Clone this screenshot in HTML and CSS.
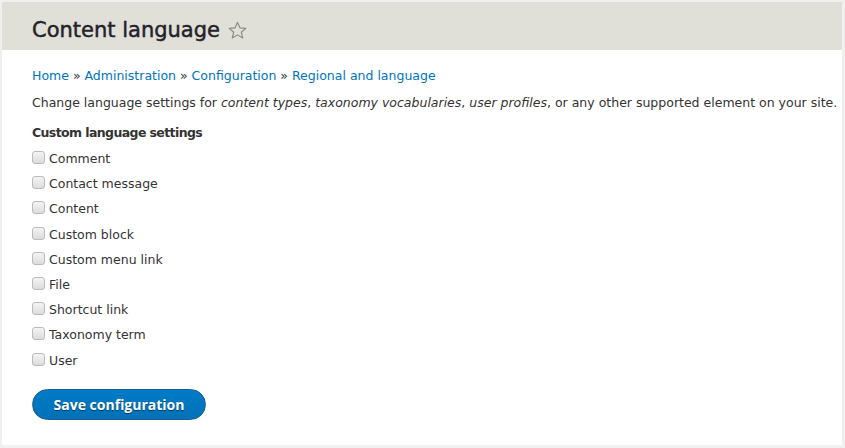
FILE: index.html
```html
<!DOCTYPE html>
<html>
<head>
<meta charset="utf-8">
<link rel="stylesheet" href="styles.css">
</head>
<body>
<div class="frame">
  <header class="page-header">
    <h1 class="title">Content language</h1>
    <svg class="star" width="19" height="19" viewBox="0 0 20 20"><polygon points="10,1.5 12.6,7.2 18.7,7.7 14,11.8 15.5,17.9 10,14.6 4.5,17.9 6,11.8 1.3,7.7 7.4,7.2" fill="none" stroke="#8a8a82" stroke-width="1.2" stroke-linejoin="round"/></svg>
  </header>
  <main class="content">
    <nav class="breadcrumb"><a href="#">Home</a> » <a href="#">Administration</a> » <a href="#">Configuration</a> » <a href="#">Regional and language</a></nav>
    <p class="desc">Change language settings for <em>content types</em>, <em>taxonomy vocabularies</em>, <em>user profiles</em>, or any other supported element on your site.</p>
    <div class="group-title">Custom language settings</div>
    <ul class="checks">
      <li><span class="box"></span>Comment</li>
      <li><span class="box"></span>Contact message</li>
      <li><span class="box"></span>Content</li>
      <li><span class="box"></span>Custom block</li>
      <li><span class="box"></span>Custom menu link</li>
      <li><span class="box"></span>File</li>
      <li><span class="box"></span>Shortcut link</li>
      <li><span class="box"></span>Taxonomy term</li>
      <li><span class="box"></span>User</li>
    </ul>
    <button class="btn">Save configuration</button>
  </main>
</div>
</body>
</html>
```
FILE: styles.css
```css
html, body { margin: 0; padding: 0; }
body {
  background: #f0f0f0;
  font-family: "DejaVu Sans", sans-serif;
  color: #333;
  font-size: 12.5px;
}
.frame {
  margin: 2px 3px 3px 2px;
  background: #fff;
  height: 443px;
  display: flex;
  flex-direction: column;
}
.page-header {
  background: #e0dfd8;
  height: 48px;
  box-sizing: border-box;
  padding: 7px 0 0 30px;
  display: flex;
  align-items: center;
  gap: 8px;
}
.title {
  margin: 0;
  font-size: 21px;
  font-weight: normal;
  color: #1f2228;
  -webkit-text-stroke: 0.45px #1f2228;
}
.star { margin-top: 1px; }
.content { padding: 17px 30px 0 30px; }
.breadcrumb { line-height: 18px; height: 18px; }
.breadcrumb a { color: #0074bd; text-decoration: none; }
.desc { margin: 9px 0 0; line-height: 18px; white-space: nowrap; }
.group-title { font-weight: bold; margin-top: 12px; line-height: 18px; letter-spacing: -0.6px; }
.checks { list-style: none; margin: 4px 0 0; padding: 0; }
.checks li { height: 25.2px; display: flex; align-items: center; }
.box {
  width: 11px; height: 11px;
  border: 1px solid #bbb;
  border-radius: 3px;
  background: linear-gradient(#f4f4f4, #dcdcdc);
  margin-right: 4px;
  margin-top: -2px;
}
.btn {
  margin-top: 16px;
  width: 174px; height: 31px;
  border: 1px solid #1e5c90;
  border-radius: 16px;
  background: linear-gradient(#007bc6, #0071b8);
  color: #fff;
  font-family: "Open Sans", sans-serif;
  font-weight: bold;
  font-size: 14px;
  text-shadow: 0 1px 1px rgba(0,0,0,.5);
  padding: 0;
}
```
